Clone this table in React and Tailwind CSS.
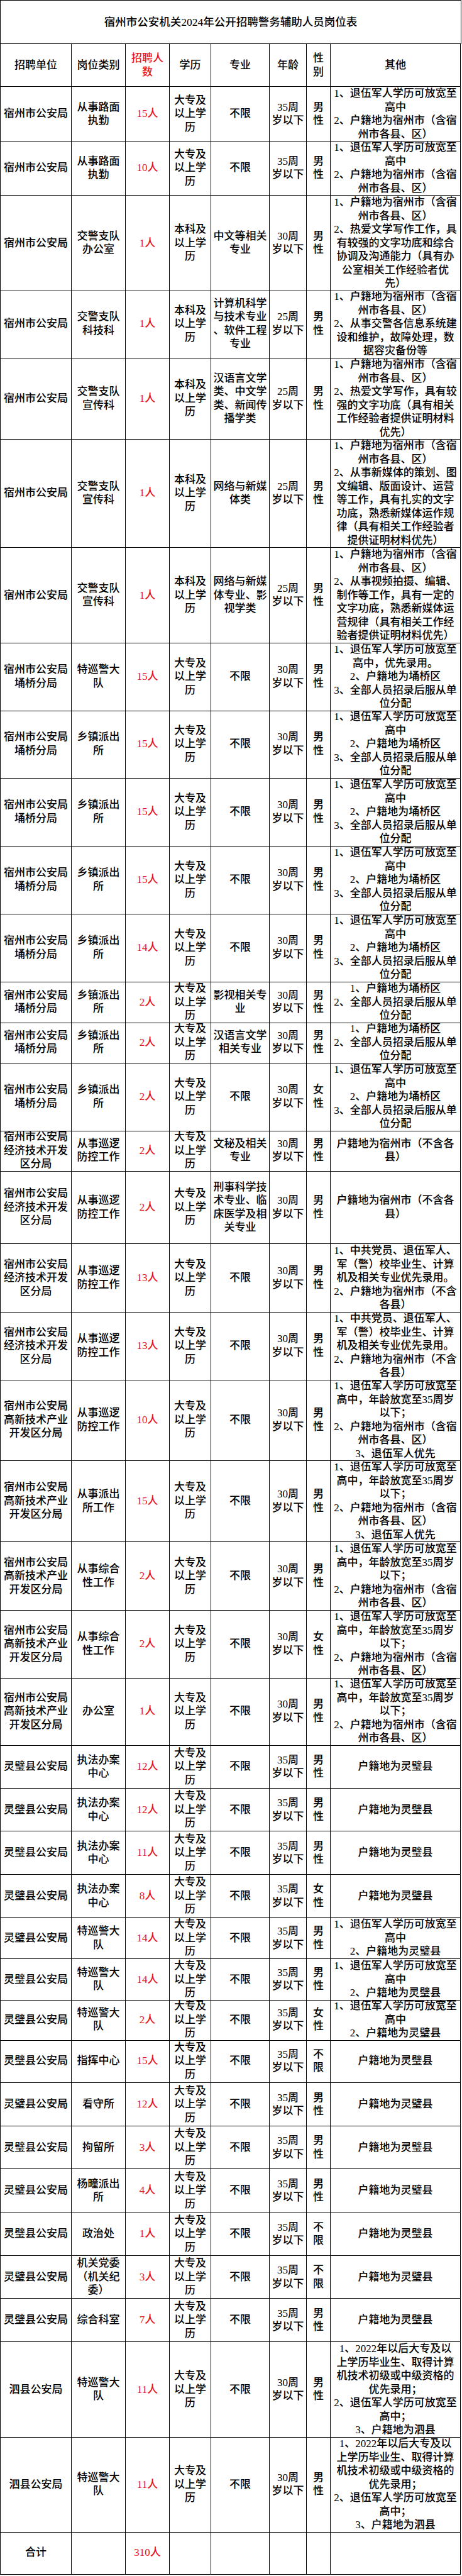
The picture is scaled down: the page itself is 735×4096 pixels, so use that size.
import React from 'react';

// column widths follow the reference table (scaled to 0.798)
const COLS = 'grid grid-cols-[113px_86px_70px_66px_93px_59px_38px_207px]';

const SZ = '宿州市公安局';
const YQ = '宿州市公安局\n埇桥分局';
const JK = '宿州市公安局\n经济技术开发\n区分局';
const GX = '宿州市公安局\n高新技术产业\n开发区分局';
const LB = '灵璧县公安局';
const SX = '泗县公安局';

const DZ = '大专及\n以上学\n历';
const BK = '本科及\n以上学\n历';
const A25 = '25周\n岁以下';
const A30 = '30周\n岁以下';
const A35 = '35周\n岁以下';
const M = '男\n性';
const F = '女\n性';
const ANY = '不\n限';

const TUIWU_SZ = '1、退伍军人学历可放宽至\n高中\n2、户籍地为宿州市（含宿\n州市各县、区）';
const YQ_FULL = '1、退伍军人学历可放宽至\n高中\n2、户籍地为埇桥区\n3、全部人员招录后服从单\n位分配';
const YQ_SHORT = '1、户籍地为埇桥区\n2、全部人员招录后服从单\n位分配';
const JK_NOT = '户籍地为宿州市（不含各\n县）';
const JK_13 = '1、中共党员、退伍军人、\n军（警）校毕业生、计算\n机及相关专业优先录用。\n2、户籍地为宿州市（不含\n各县）';
const GX_A = '1、退伍军人学历可放宽至\n高中，年龄放宽至35周岁\n以下；\n2、户籍地为宿州市（含宿\n州市各县、区）\n3、退伍军人优先';
const GX_B = '1、退伍军人学历可放宽至\n高中，年龄放宽至35周岁\n以下；\n2、户籍地为宿州市（含宿\n州市各县、区）';
const LB_HJ = '户籍地为灵璧县';
const LB_TX = '1、退伍军人学历可放宽至\n高中\n2、户籍地为灵璧县';
const SX_TX = '1、2022年以后大专及以\n上学历毕业生、取得计算\n机技术初级或中级资格的\n优先录用；\n2、退伍军人学历可放宽至\n高中；\n3、户籍地为泗县';

const rows = [
    { h: 'h-[86px]', c: [SZ, '从事路面\n执勤', '15人', DZ, '不限', A35, M, TUIWU_SZ] },
    { h: 'h-[87px]', c: [SZ, '从事路面\n执勤', '10人', DZ, '不限', A35, M, TUIWU_SZ] },
    { h: 'h-[150px]', c: [SZ, '交警支队\n办公室', '1人', BK, '中文等相关\n专业', A30, M, '1、户籍地为宿州市（含宿\n州市各县、区）\n2、热爱文学写作工作，具\n有较强的文字功底和综合\n协调及沟通能力（具有办\n公室相关工作经验者优\n先）'] },
    { h: 'h-[108px]', c: [SZ, '交警支队\n科技科', '1人', BK, '计算机科学\n与技术专业\n、软件工程\n专业', A25, M, '1、户籍地为宿州市（含宿\n州市各县、区）\n2、从事交警各信息系统建\n设和维护，故障处理，数\n据容灾备份等'] },
    { h: 'h-[129px]', c: [SZ, '交警支队\n宣传科', '1人', BK, '汉语言文学\n类、中文学\n类、新闻传\n播学类', A25, M, '1、户籍地为宿州市（含宿\n州市各县、区）\n2、热爱文学写作，具有较\n强的文字功底（具有相关\n工作经验者提供证明材料\n优先）'] },
    { h: 'h-[173px]', c: [SZ, '交警支队\n宣传科', '1人', BK, '网络与新媒\n体类', A25, M, '1、户籍地为宿州市（含宿\n州市各县、区）\n2、从事新媒体的策划、图\n文编辑、版面设计、运营\n等工作，具有扎实的文字\n功底，熟悉新媒体运作规\n律（具有相关工作经验者\n提供证明材料优先）'] },
    { h: 'h-[151px]', c: [SZ, '交警支队\n宣传科', '1人', BK, '网络与新媒\n体专业、影\n视学类', A25, M, '1、户籍地为宿州市（含宿\n州市各县、区）\n2、从事视频拍摄、编辑、\n制作等工作，具有一定的\n文字功底，熟悉新媒体运\n营规律（具有相关工作经\n验者提供证明材料优先）'] },
    { h: 'h-[107px]', c: [YQ, '特巡警大\n队', '15人', DZ, '不限', A30, M, '1、退伍军人学历可放宽至\n高中，优先录用。\n2、户籍地为埇桥区\n3、全部人员招录后服从单\n位分配'] },
    { h: 'h-[108px]', c: [YQ, '乡镇派出\n所', '15人', DZ, '不限', A30, M, YQ_FULL] },
    { h: 'h-[108px]', c: [YQ, '乡镇派出\n所', '15人', DZ, '不限', A30, M, YQ_FULL] },
    { h: 'h-[108px]', c: [YQ, '乡镇派出\n所', '15人', DZ, '不限', A30, M, YQ_FULL] },
    { h: 'h-[108px]', c: [YQ, '乡镇派出\n所', '14人', DZ, '不限', A30, M, YQ_FULL] },
    { h: 'h-[64px]', c: [YQ, '乡镇派出\n所', '2人', DZ, '影视相关专\n业', A30, M, YQ_SHORT] },
    { h: 'h-[65px]', c: [YQ, '乡镇派出\n所', '2人', DZ, '汉语言文学\n相关专业', A30, M, YQ_SHORT] },
    { h: 'h-[107px]', c: [YQ, '乡镇派出\n所', '2人', DZ, '不限', A30, F, YQ_FULL] },
    { h: 'h-[65px]', c: [JK, '从事巡逻\n防控工作', '2人', DZ, '文秘及相关\n专业', A30, M, JK_NOT] },
    { h: 'h-[116px]', c: [JK, '从事巡逻\n防控工作', '2人', DZ, '刑事科学技\n术专业、临\n床医学及相\n关专业', A30, M, JK_NOT] },
    { h: 'h-[108px]', c: [JK, '从事巡逻\n防控工作', '13人', DZ, '不限', A30, M, JK_13] },
    { h: 'h-[107px]', c: [JK, '从事巡逻\n防控工作', '13人', DZ, '不限', A30, M, JK_13] },
    { h: 'h-[129px]', c: [GX, '从事巡逻\n防控工作', '10人', DZ, '不限', A30, M, GX_A] },
    { h: 'h-[130px]', c: [GX, '从事派出\n所工作', '15人', DZ, '不限', A30, M, GX_A] },
    { h: 'h-[108px]', c: [GX, '从事综合\n性工作', '2人', DZ, '不限', A30, M, GX_B] },
    { h: 'h-[107px]', c: [GX, '从事综合\n性工作', '2人', DZ, '不限', A30, F, GX_B] },
    { h: 'h-[108px]', c: [GX, '办公室', '1人', DZ, '不限', A30, M, GX_B] },
    { h: 'h-[69px]', c: [LB, '执法办案\n中心', '12人', DZ, '不限', A35, M, LB_HJ] },
    { h: 'h-[68px]', c: [LB, '执法办案\n中心', '12人', DZ, '不限', A35, M, LB_HJ] },
    { h: 'h-[69px]', c: [LB, '执法办案\n中心', '11人', DZ, '不限', A35, M, LB_HJ] },
    { h: 'h-[68px]', c: [LB, '执法办案\n中心', '8人', DZ, '不限', A35, F, LB_HJ] },
    { h: 'h-[66px]', c: [LB, '特巡警大\n队', '14人', DZ, '不限', A35, M, LB_TX] },
    { h: 'h-[64px]', c: [LB, '特巡警大\n队', '14人', DZ, '不限', A35, M, LB_TX] },
    { h: 'h-[64px]', c: [LB, '特巡警大\n队', '2人', DZ, '不限', A35, F, LB_TX] },
    { h: 'h-[69px]', c: [LB, '指挥中心', '15人', DZ, '不限', A35, ANY, LB_HJ] },
    { h: 'h-[69px]', c: [LB, '看守所', '12人', DZ, '不限', A35, M, LB_HJ] },
    { h: 'h-[68px]', c: [LB, '拘留所', '3人', DZ, '不限', A35, M, LB_HJ] },
    { h: 'h-[69px]', c: [LB, '杨疃派出\n所', '4人', DZ, '不限', A35, M, LB_HJ] },
    { h: 'h-[69px]', c: [LB, '政治处', '1人', DZ, '不限', A35, ANY, LB_HJ] },
    { h: 'h-[68px]', c: [LB, '机关党委\n（机关纪\n委）', '3人', DZ, '不限', A35, ANY, LB_HJ] },
    { h: 'h-[69px]', c: [LB, '综合科室', '7人', DZ, '不限', A35, M, LB_HJ] },
    { h: 'h-[151px]', c: [SX, '特巡警大\n队', '11人', DZ, '不限', A30, M, SX_TX] },
    { h: 'h-[150px]', c: [SX, '特巡警大\n队', '11人', DZ, '不限', A30, M, SX_TX] },
];

const Cell = ({ children, red }) => (
    <div className={`border-r border-b border-black flex items-center justify-center text-center whitespace-pre leading-[21.5px] ${red ? 'text-[#e8141b]' : 'text-black'}`}>
        {children}
    </div>
);

const Row = ({ h, cells }) => (
    <div className={`${COLS} ${h}`}>
        {cells.map((text, i) => (
            <Cell key={i} red={i === 2}>{text}</Cell>
        ))}
    </div>
);

export default function App() {
    return (
        <div className="bg-white w-[735px] font-['Liberation_Serif','Noto_Sans_CJK_SC',serif] font-medium text-[17px]">
            <div className="w-[734px] border-t border-l border-black">
                {/* Title */}
                <div className="h-[69px] border-r border-b border-black flex items-center justify-center text-[17.5px] text-black">
                    宿州市公安机关2024年公开招聘警务辅助人员岗位表
                </div>

                {/* Header */}
                <Row h="h-[68px]" cells={['招聘单位', '岗位类别', '招聘人\n数', '学历', '专业', '年龄', '性\n别', '其他']} />
                {rows.map((r, idx) => (
                    <Row key={idx} h={r.h} cells={r.c} />
                ))}

                {/* Total */}
                <Row h="h-[69px]" cells={['合计', '', '310人', '', '', '', '', '']} />
            </div>
        </div>
    );
}
